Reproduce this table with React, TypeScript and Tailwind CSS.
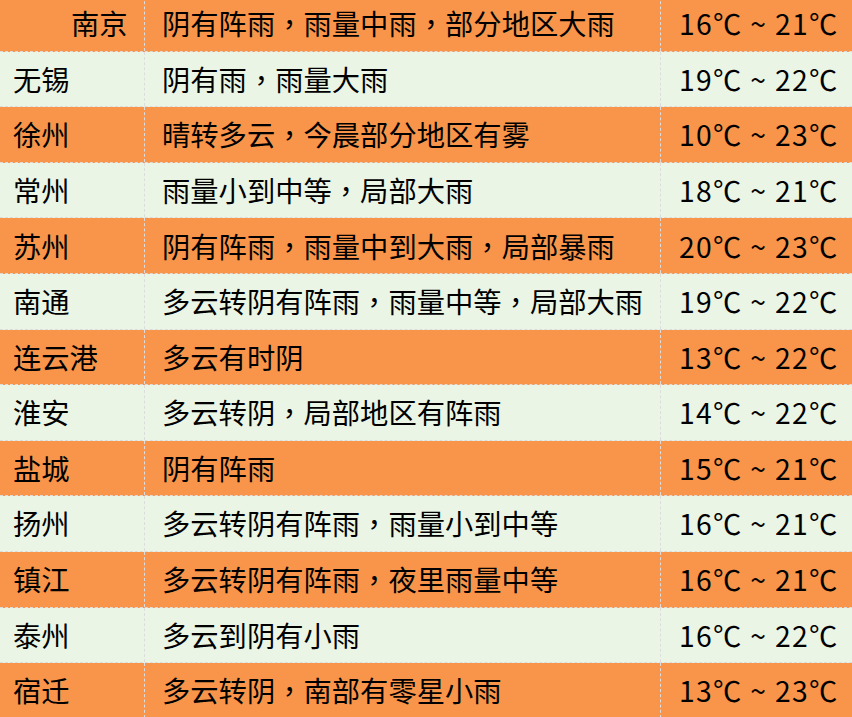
const rows = [
  { city: '南京', weather: '阴有阵雨，雨量中雨，部分地区大雨', temp: '16℃ ~ 21℃' },
  { city: '无锡', weather: '阴有雨，雨量大雨', temp: '19℃ ~ 22℃' },
  { city: '徐州', weather: '晴转多云，今晨部分地区有雾', temp: '10℃ ~ 23℃' },
  { city: '常州', weather: '雨量小到中等，局部大雨', temp: '18℃ ~ 21℃' },
  { city: '苏州', weather: '阴有阵雨，雨量中到大雨，局部暴雨', temp: '20℃ ~ 23℃' },
  { city: '南通', weather: '多云转阴有阵雨，雨量中等，局部大雨', temp: '19℃ ~ 22℃' },
  { city: '连云港', weather: '多云有时阴', temp: '13℃ ~ 22℃' },
  { city: '淮安', weather: '多云转阴，局部地区有阵雨', temp: '14℃ ~ 22℃' },
  { city: '盐城', weather: '阴有阵雨', temp: '15℃ ~ 21℃' },
  { city: '扬州', weather: '多云转阴有阵雨，雨量小到中等', temp: '16℃ ~ 21℃' },
  { city: '镇江', weather: '多云转阴有阵雨，夜里雨量中等', temp: '16℃ ~ 21℃' },
  { city: '泰州', weather: '多云到阴有小雨', temp: '16℃ ~ 22℃' },
  { city: '宿迁', weather: '多云转阴，南部有零星小雨', temp: '13℃ ~ 23℃' },
];

// centred full-width comma, as the source font draws it
function Weather({ text }: { text: string }) {
  const parts = text.split('，');
  return (
    <>
      {parts.map((p, i) => (
        <span key={i}>
          {p}
          {i < parts.length - 1 && (
            <span style={{ fontFamily: '"Noto Sans CJK TC", sans-serif' }}>，</span>
          )}
        </span>
      ))}
    </>
  );
}

export default function App() {
  return (
    <div
      className="w-[852px] h-[717px] overflow-hidden bg-[#ebf5e6] text-black text-[28.3px] leading-none"
      style={{ fontFamily: '"Noto Sans CJK SC", "Noto Sans", sans-serif' }}
    >
      <div className="-mt-[4px]">
        {rows.map((r, i) => (
          <div
            key={r.city}
            className={`grid grid-cols-[145px_516px_1fr] h-[55.6px] border-b border-dashed border-[#dcdcdc] ${
              i % 2 === 0 ? 'bg-[#f8954a]' : 'bg-[#ebf5e6]'
            }`}
          >
            <div
              className={`flex items-center border-r border-dashed border-[#dcdcdc] ${
                i === 0 ? 'pl-[71px]' : 'pl-[13px]'
              }`}
            >
              {r.city}
            </div>
            <div className="flex items-center pl-[17px] border-r border-dashed border-[#dcdcdc] whitespace-nowrap">
              <Weather text={r.weather} />
            </div>
            <div className="flex items-center pl-[18px] whitespace-nowrap tracking-[1.3px]">{r.temp}</div>
          </div>
        ))}
      </div>
    </div>
  );
}
